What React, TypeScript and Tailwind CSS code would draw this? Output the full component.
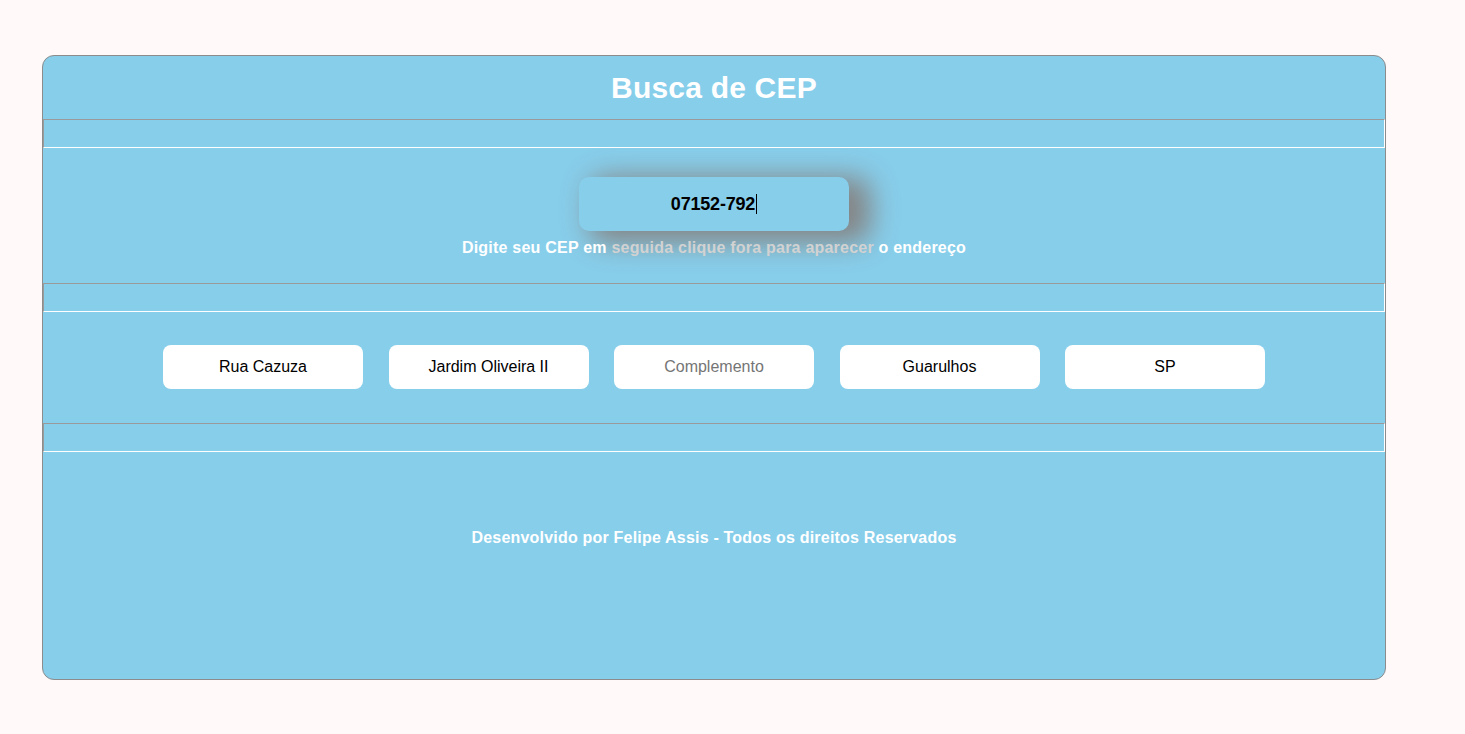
const campos = [
  { valor: 'Rua Cazuza', vazio: false },
  { valor: 'Jardim Oliveira II', vazio: false },
  { valor: 'Complemento', vazio: true },
  { valor: 'Guarulhos', vazio: false },
  { valor: 'SP', vazio: false },
]

function Divisor() {
  return (
    <div className="h-[29px] border border-t-[#9a9a9a] border-l-[#9a9a9a] border-r-white border-b-white" />
  )
}

export default function App() {
  return (
    <div
      className="min-h-[734px] w-full bg-[#fffaf9] pt-[55px]"
      style={{ fontFamily: '"Liberation Sans", Arial, sans-serif' }}
    >
      <div className="ml-[42px] w-[1344px] h-[625px] overflow-hidden rounded-[12px] border border-[#8c8c8c] bg-[#87ceeb]">
        <header className="flex h-[63px] items-center justify-center">
          <h1 className="text-[30px] font-bold text-white leading-none tracking-[0.2px]">Busca de CEP</h1>
        </header>

        <Divisor />

        <section className="flex h-[135px] flex-col items-center pt-[29px]">
          <div className="flex h-[54px] w-[270px] items-center justify-center rounded-[10px] bg-[#87ceeb] shadow-[16px_6px_28px_6px_#858585]">
            <span className="text-[18px] font-bold text-black tracking-[-0.2px]">07152-792</span>
            <span className="ml-[1px] h-[20px] w-[1px] bg-black" />
          </div>
          <p className="mt-[7px] text-[16px] font-bold leading-[20px] tracking-[0.22px] text-white">
            Digite seu CEP em{' '}
            <span className="text-[#d2d2d2]">seguida clique fora para aparecer</span> o endereço
          </p>
        </section>

        <Divisor />

        <section className="flex h-[111px] items-start justify-center gap-[25.5px] pt-[33px]">
          {campos.map((c) => (
            <div
              key={c.valor}
              className={`flex h-[44px] w-[200px] items-center justify-center rounded-[8px] bg-white text-[16px] ${
                c.vazio ? 'text-[#757575]' : 'text-black'
              }`}
            >
              {c.valor}
            </div>
          ))}
        </section>

        <Divisor />

        <footer className="flex justify-center pt-[76px]">
          <p className="text-[16px] font-bold leading-[20px] tracking-[0.2px] text-white">
            Desenvolvido por Felipe Assis - Todos os direitos Reservados
          </p>
        </footer>
      </div>
    </div>
  )
}
